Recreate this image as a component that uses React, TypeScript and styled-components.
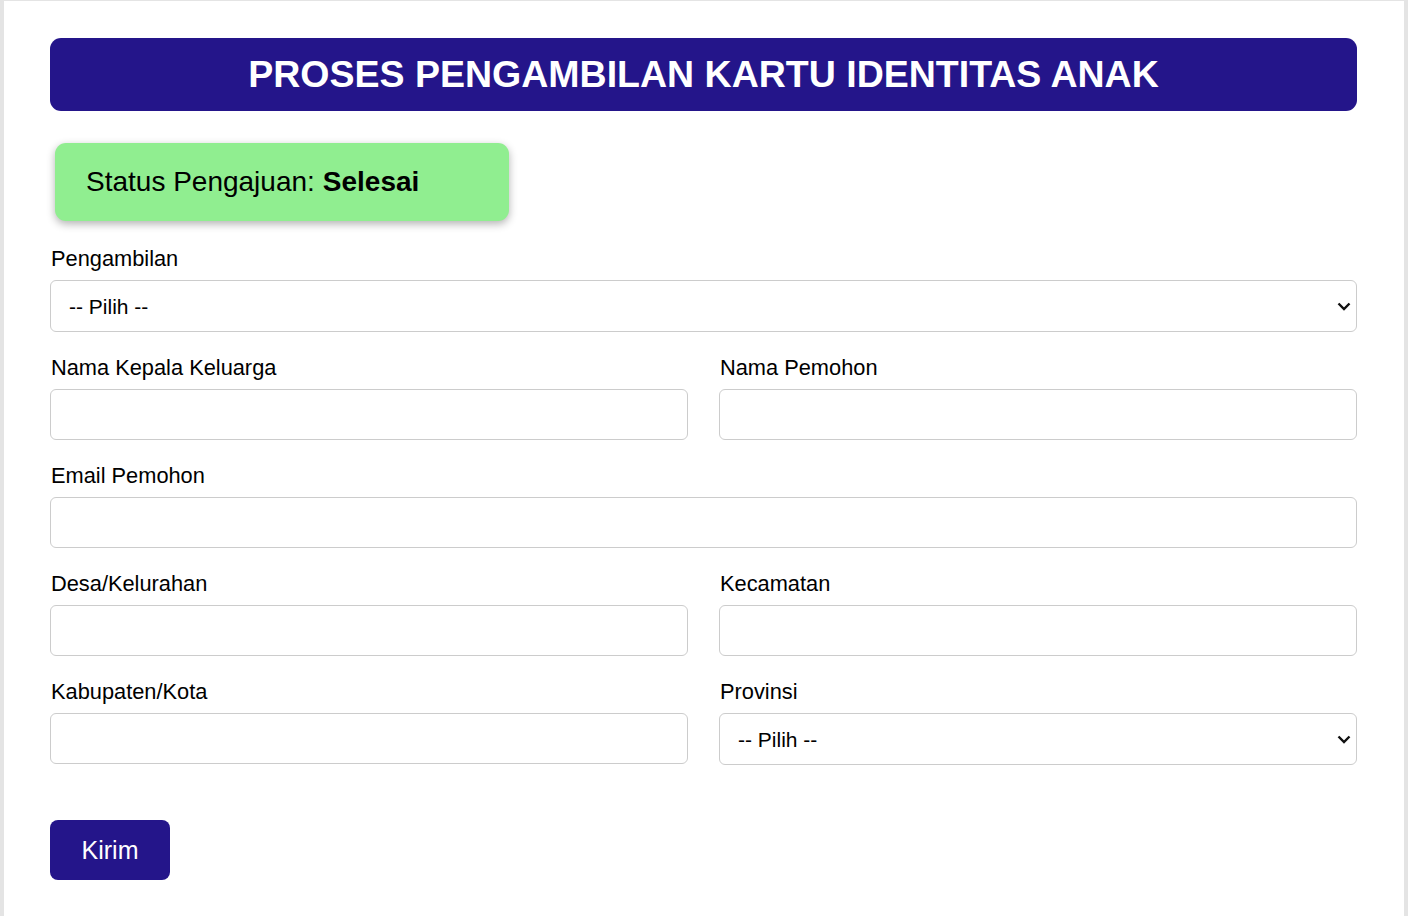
import React from 'react';
import styled, { createGlobalStyle } from 'styled-components';

const GlobalStyle = createGlobalStyle`
  html, body {
    margin: 0;
    padding: 0;
    background: #e4e4e4;
    font-family: "Liberation Sans", Arial, sans-serif;
  }
`;

const Page = styled.div`
  width: 1400px;
  margin: 1px auto 0;
  min-height: 915px;
  background: #ffffff;
  padding: 37px 47px 40px 46px;
  box-sizing: border-box;
`;

const Header = styled.h1`
  margin: 0;
  height: 73px;
  background: #24158a;
  border-radius: 11px;
  color: #ffffff;
  font-size: 37.5px;
  font-weight: 700;
  display: flex;
  align-items: center;
  justify-content: center;
`;

const StatusBox = styled.div`
  width: 454px;
  height: 78px;
  margin: 32px 0 25px 5px;
  box-sizing: border-box;
  padding-left: 31px;
  display: flex;
  align-items: center;
  background: #90ee90;
  border-radius: 11px;
  box-shadow: 0 3px 8px rgba(0, 0, 0, 0.3);
  font-size: 28px;
  color: #000;

  strong {
    margin-left: 8px;
  }
`;

const Row = styled.div`
  display: grid;
  grid-template-columns: 1fr 1fr;
  column-gap: 31px;
`;

const Group = styled.div`
  display: flex;
  flex-direction: column;
  margin-bottom: 23px;
`;

const Label = styled.label`
  font-size: 21.8px;
  line-height: 25px;
  color: #000;
  margin-bottom: 9px;
  padding-left: 1px;
`;

const Input = styled.input`
  height: 51px;
  box-sizing: border-box;
  border: 1px solid #cccccc;
  border-radius: 6px;
  font-size: 21px;
  font-family: inherit;
  padding: 0 18px;
  background: #fff;
`;

const SelectWrap = styled.div`
  position: relative;
  display: flex;
  flex-direction: column;
`;

const Select = styled.select`
  appearance: none;
  height: 52px;
  box-sizing: border-box;
  border: 1px solid #cccccc;
  border-radius: 6px;
  font-size: 21px;
  font-family: inherit;
  padding: 0 40px 0 18px;
  color: #000;
  background: #fff;
`;

const Chevron = styled.svg`
  position: absolute;
  right: 6px;
  top: 50%;
  width: 14px;
  height: 9px;
  margin-top: -4px;
  pointer-events: none;
`;

const Button = styled.button`
  margin-top: 32px;
  width: 120px;
  height: 60px;
  border: none;
  border-radius: 8px;
  background: #24158a;
  color: #fff;
  font-size: 25px;
  font-family: inherit;
  cursor: pointer;
`;

const Field: React.FC<{ label: string; select?: boolean }> = ({ label, select }) => (
  <Group>
    <Label>{label}</Label>
    {select ? (
      <SelectWrap>
        <Select defaultValue="">
          <option value="">-- Pilih --</option>
        </Select>
        <Chevron viewBox="0 0 14 9">
          <path d="M1.5 1.5 L7 7 L12.5 1.5" fill="none" stroke="#111" strokeWidth="2.4" />
        </Chevron>
      </SelectWrap>
    ) : (
      <Input type="text" />
    )}
  </Group>
);

export default function App() {
  return (
    <>
      <GlobalStyle />
      <Page>
        <Header>PROSES PENGAMBILAN KARTU IDENTITAS ANAK</Header>
        <StatusBox>
          Status Pengajuan: <strong>Selesai</strong>
        </StatusBox>
        <Field label="Pengambilan" select />
        <Row>
          <Field label="Nama Kepala Keluarga" />
          <Field label="Nama Pemohon" />
        </Row>
        <Field label="Email Pemohon" />
        <Row>
          <Field label="Desa/Kelurahan" />
          <Field label="Kecamatan" />
        </Row>
        <Row>
          <Field label="Kabupaten/Kota" />
          <Field label="Provinsi" select />
        </Row>
        <Button>Kirim</Button>
      </Page>
    </>
  );
}
